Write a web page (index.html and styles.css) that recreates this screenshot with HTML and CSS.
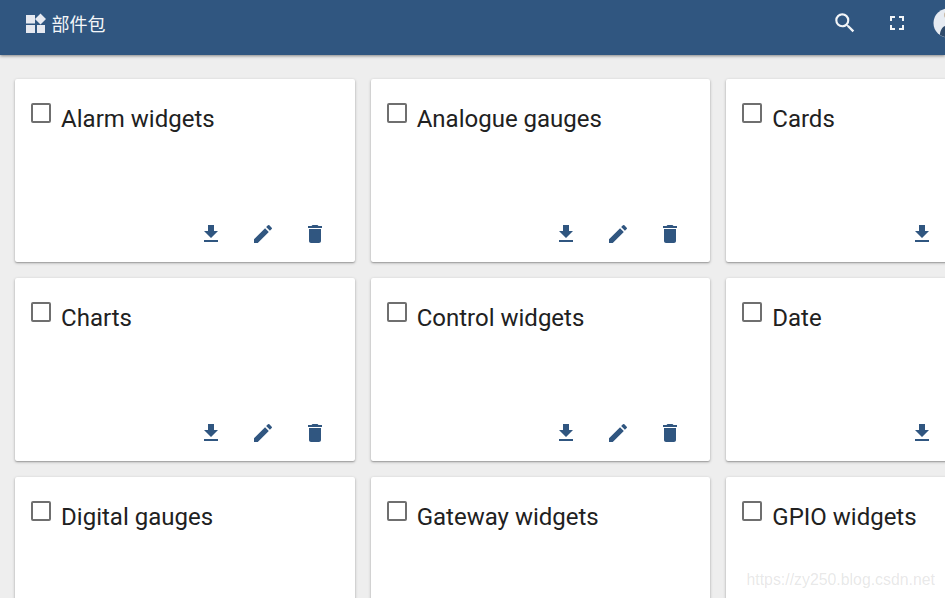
FILE: index.html
```html
<!DOCTYPE html>
<html lang="zh">
<head>
<meta charset="utf-8">
<title>部件包</title>
<link rel="stylesheet" href="styles.css">
</head>
<body>
<header class="toolbar">
  <div class="title">
    <svg class="title-icon" viewBox="0 0 20 20"><path d="M0 2h9v8.500H0zM0 12h9v8H0zM11 12h8v8h-8zM14.500 0.500l5.500 5.500-5.500 5.500L9 6z"/></svg>
    <span>部件包</span>
  </div>
  <div class="tools">
    <svg class="tool search" viewBox="0 0 24 24"><path d="M15.5 14h-.79l-.28-.27A6.47 6.47 0 0 0 16 9.5 6.5 6.500 0 1 0 9.500 16c1.610 0 3.090-.59 4.230-1.570l.27.28v.79l5 4.990L20.490 19l-4.990-5zm-6 0C7.010 14 5 11.990 5 9.500S7.010 5 9.500 5 14 7.010 14 9.500 11.990 14 9.500 14z"/></svg>
    <svg class="tool full" viewBox="0 0 24 24"><path d="M7 14H5v5h5v-2H7v-3zm-2-4h2V7h3V5H5v5zm12 7h-3v2h5v-5h-2v3zM14 5v2h3v3h2V5h-5z"/></svg>
    <svg class="avatar" viewBox="0 0 30 30"><circle class="avatar-face" cx="15" cy="15" r="14.500"/><ellipse class="avatar-head" cx="13" cy="7" rx="2" ry="3"/><path class="avatar-body" d="M7 27c0-4 2-8 5-9l1-1v12c-2 0-4-1-6-2z"/></svg>
  </div>
</header>
<main class="grid">
  <article class="card"><div class="head"><span class="check"></span><h2>Alarm widgets</h2></div><div class="actions"><svg class="act" viewBox="0 0 24 24"><path d="M19 9h-4V3H9v6H5l7 7 7-7zM5 18v2h14v-2H5z"/></svg><svg class="act" viewBox="0 0 24 24"><path d="M3 17.25V21h3.75L17.81 9.94l-3.75-3.75L3 17.25zM20.71 7.04a1 1 0 0 0 0-1.41l-2.34-2.34a1 1 0 0 0-1.41 0l-1.83 1.83 3.75 3.75 1.83-1.83z"/></svg><svg class="act" viewBox="0 0 24 24"><path d="M6 19c0 1.1.9 2 2 2h8c1.1 0 2-.9 2-2V7H6v12zM19 4h-3.5l-1-1h-5l-1 1H5v2h14V4z"/></svg></div></article>
  <article class="card"><div class="head"><span class="check"></span><h2>Analogue gauges</h2></div><div class="actions"><svg class="act" viewBox="0 0 24 24"><path d="M19 9h-4V3H9v6H5l7 7 7-7zM5 18v2h14v-2H5z"/></svg><svg class="act" viewBox="0 0 24 24"><path d="M3 17.25V21h3.75L17.81 9.94l-3.75-3.75L3 17.25zM20.71 7.04a1 1 0 0 0 0-1.41l-2.34-2.34a1 1 0 0 0-1.41 0l-1.83 1.83 3.75 3.75 1.83-1.83z"/></svg><svg class="act" viewBox="0 0 24 24"><path d="M6 19c0 1.1.9 2 2 2h8c1.1 0 2-.9 2-2V7H6v12zM19 4h-3.5l-1-1h-5l-1 1H5v2h14V4z"/></svg></div></article>
  <article class="card"><div class="head"><span class="check"></span><h2>Cards</h2></div><div class="actions"><svg class="act" viewBox="0 0 24 24"><path d="M19 9h-4V3H9v6H5l7 7 7-7zM5 18v2h14v-2H5z"/></svg><svg class="act" viewBox="0 0 24 24"><path d="M3 17.25V21h3.75L17.81 9.94l-3.75-3.75L3 17.25zM20.71 7.04a1 1 0 0 0 0-1.41l-2.34-2.34a1 1 0 0 0-1.41 0l-1.83 1.83 3.75 3.75 1.83-1.83z"/></svg><svg class="act" viewBox="0 0 24 24"><path d="M6 19c0 1.1.9 2 2 2h8c1.1 0 2-.9 2-2V7H6v12zM19 4h-3.5l-1-1h-5l-1 1H5v2h14V4z"/></svg></div></article>
  <article class="card"><div class="head"><span class="check"></span><h2>Charts</h2></div><div class="actions"><svg class="act" viewBox="0 0 24 24"><path d="M19 9h-4V3H9v6H5l7 7 7-7zM5 18v2h14v-2H5z"/></svg><svg class="act" viewBox="0 0 24 24"><path d="M3 17.25V21h3.75L17.81 9.94l-3.75-3.75L3 17.25zM20.71 7.04a1 1 0 0 0 0-1.41l-2.34-2.34a1 1 0 0 0-1.41 0l-1.83 1.83 3.75 3.75 1.83-1.83z"/></svg><svg class="act" viewBox="0 0 24 24"><path d="M6 19c0 1.1.9 2 2 2h8c1.1 0 2-.9 2-2V7H6v12zM19 4h-3.5l-1-1h-5l-1 1H5v2h14V4z"/></svg></div></article>
  <article class="card"><div class="head"><span class="check"></span><h2>Control widgets</h2></div><div class="actions"><svg class="act" viewBox="0 0 24 24"><path d="M19 9h-4V3H9v6H5l7 7 7-7zM5 18v2h14v-2H5z"/></svg><svg class="act" viewBox="0 0 24 24"><path d="M3 17.25V21h3.75L17.81 9.94l-3.75-3.75L3 17.25zM20.71 7.04a1 1 0 0 0 0-1.41l-2.34-2.34a1 1 0 0 0-1.41 0l-1.83 1.83 3.75 3.75 1.83-1.83z"/></svg><svg class="act" viewBox="0 0 24 24"><path d="M6 19c0 1.1.9 2 2 2h8c1.1 0 2-.9 2-2V7H6v12zM19 4h-3.5l-1-1h-5l-1 1H5v2h14V4z"/></svg></div></article>
  <article class="card"><div class="head"><span class="check"></span><h2>Date</h2></div><div class="actions"><svg class="act" viewBox="0 0 24 24"><path d="M19 9h-4V3H9v6H5l7 7 7-7zM5 18v2h14v-2H5z"/></svg><svg class="act" viewBox="0 0 24 24"><path d="M3 17.25V21h3.75L17.81 9.94l-3.75-3.75L3 17.25zM20.71 7.04a1 1 0 0 0 0-1.41l-2.34-2.34a1 1 0 0 0-1.41 0l-1.83 1.83 3.75 3.75 1.83-1.83z"/></svg><svg class="act" viewBox="0 0 24 24"><path d="M6 19c0 1.1.9 2 2 2h8c1.1 0 2-.9 2-2V7H6v12zM19 4h-3.5l-1-1h-5l-1 1H5v2h14V4z"/></svg></div></article>
  <article class="card"><div class="head"><span class="check"></span><h2>Digital gauges</h2></div></article>
  <article class="card"><div class="head"><span class="check"></span><h2>Gateway widgets</h2></div></article>
  <article class="card"><div class="head"><span class="check"></span><h2>GPIO widgets</h2></div></article>
</main>
<div class="watermark">https://zy250.blog.csdn.net</div>
</body>
</html>
```
FILE: styles.css
```css
html, body {
  margin: 0;
  height: 100%;
  overflow: hidden;
}
body {
  position: relative;
  background: #eeeeee;
  font-family: Roboto, "Noto Sans CJK SC", sans-serif;
  color: #212121;
}
.toolbar {
  height: 55px;
  background: #305680;
  color: #fff;
  display: flex;
  align-items: center;
  justify-content: space-between;
  box-shadow: 0 1px 3px rgba(0,0,0,.45);
  position: relative;
  padding-bottom: 9px;
  box-sizing: border-box;
}
.title {
  display: flex;
  align-items: center;
  gap: 5.5px;
  padding-left: 26px;
  font-size: 18px;
  font-family: "Noto Sans CJK SC", sans-serif;
  color: #f4f6f9;
}
.title-icon {
  width: 20px;
  height: 20px;
  fill: #e6e9f0;
}
.tools {
  display: flex;
  align-items: center;
  width: 113px;
  flex: none;
}
.tool {
  fill: #f2f5f8;
  flex: none;
}
.search {
  width: 26px;
  height: 26px;
}
.full {
  width: 24px;
  height: 24px;
  margin-left: 27px;
}
.avatar {
  width: 30px;
  height: 30px;
  flex: none;
  margin-left: 24px;
}
.avatar-face { fill: #e6ebf2; }
.avatar-head { fill: #c9b9a6; }
.avatar-body { fill: #2f4a6b; }
.grid {
  display: grid;
  grid-template-columns: repeat(3, 339.6px);
  grid-auto-rows: 183px;
  gap: 16px;
  padding: 24px 15px;
}
.card {
  background: #fff;
  border-radius: 2px;
  box-shadow: 0 1px 3px rgba(0,0,0,.3), 0 1px 1px rgba(0,0,0,.14);
  display: flex;
  flex-direction: column;
  justify-content: space-between;
}
.head {
  display: flex;
  align-items: flex-start;
  padding: 24px 16px 0;
  gap: 10.1px;
}
.check {
  width: 16px;
  height: 16px;
  border: 2px solid #6f6f6f;
  border-radius: 2px;
  flex: none;
}
h2 {
  margin: 0;
  font-size: 24px;
  font-weight: 400;
  line-height: 32px;
}
.actions {
  display: flex;
  justify-content: flex-end;
  gap: 28px;
  padding: 0 28px 16px 0;
}
.act {
  width: 24px;
  height: 24px;
  fill: #305680;
}
.watermark {
  position: absolute;
  right: 10px;
  bottom: 9px;
  font-family: "Liberation Sans", sans-serif;
  font-size: 15.85px;
  color: rgba(120,120,120,.18);
}
```
